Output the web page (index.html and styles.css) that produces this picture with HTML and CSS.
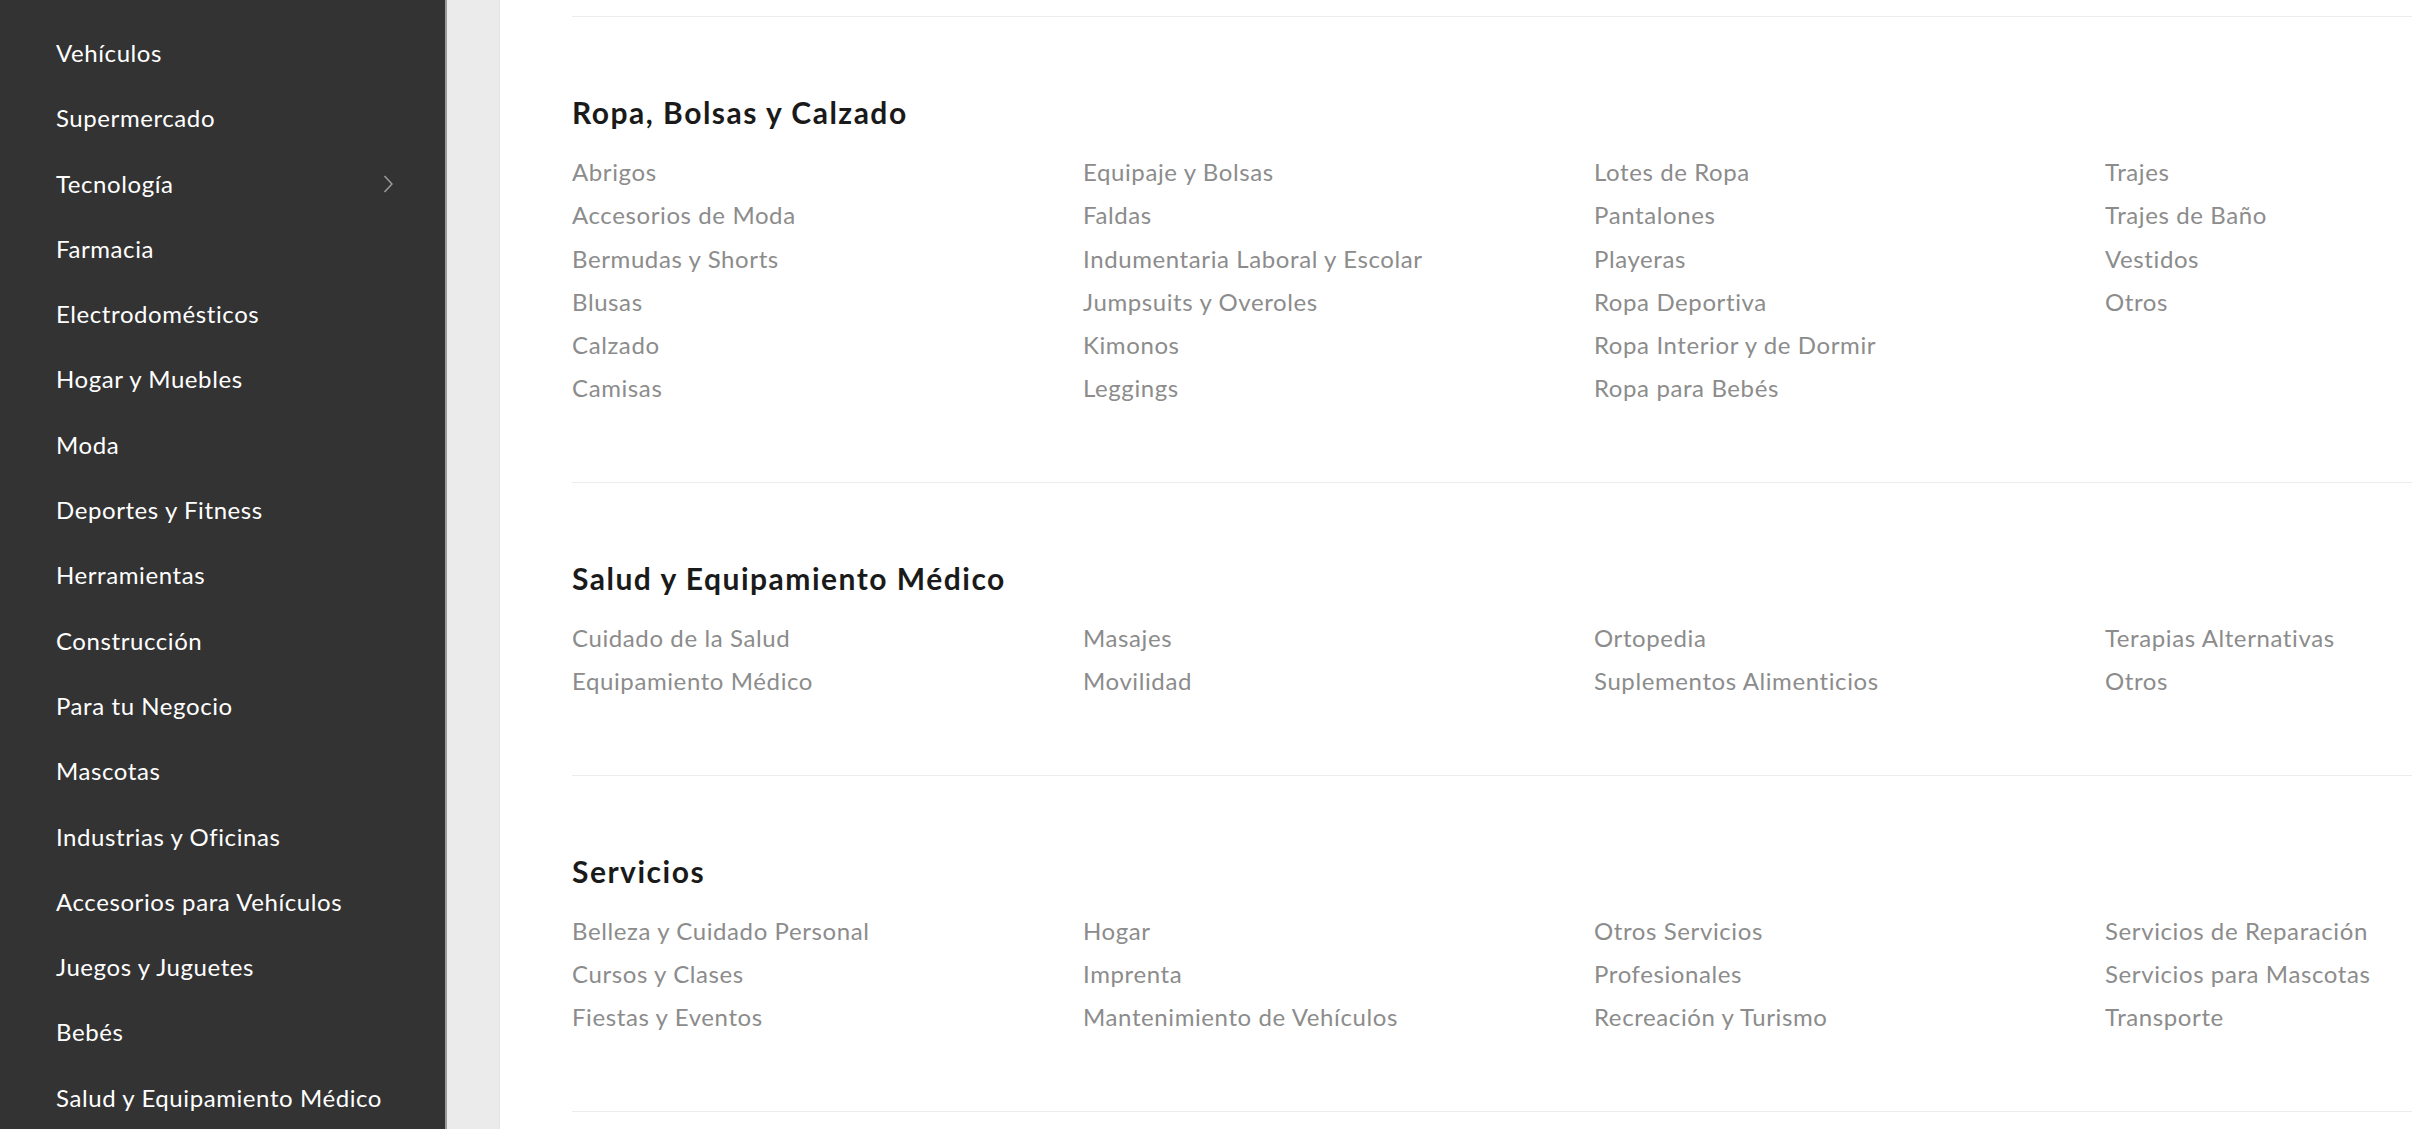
FILE: index.html
```html
<!DOCTYPE html>
<html lang="es">
<head>
<meta charset="utf-8">
<title>Categorías</title>
<link rel="stylesheet" href="styles.css">
</head>
<body>
<div class="layout">
  <nav class="sidebar">
    <ul class="side-list">
      <li class="side-item">Vehículos</li>
      <li class="side-item">Supermercado</li>
      <li class="side-item has-sub">Tecnología
        <svg class="chev" width="10" height="18" viewBox="0 0 10 18"><polyline points="1.5,1 9,9 1.5,17" fill="none" stroke="#9a9a9a" stroke-width="1.6"/></svg>
      </li>
      <li class="side-item">Farmacia</li>
      <li class="side-item">Electrodomésticos</li>
      <li class="side-item">Hogar y Muebles</li>
      <li class="side-item">Moda</li>
      <li class="side-item">Deportes y Fitness</li>
      <li class="side-item">Herramientas</li>
      <li class="side-item">Construcción</li>
      <li class="side-item">Para tu Negocio</li>
      <li class="side-item">Mascotas</li>
      <li class="side-item">Industrias y Oficinas</li>
      <li class="side-item">Accesorios para Vehículos</li>
      <li class="side-item">Juegos y Juguetes</li>
      <li class="side-item">Bebés</li>
      <li class="side-item">Salud y Equipamiento Médico</li>
    </ul>
  </nav>
  <div class="gutter"></div>
  <main class="content">
    <section class="cat">
      <h2 class="cat-title">Ropa, Bolsas y Calzado</h2>
      <div class="cat-grid rows-6">
        <a class="cat-link">Abrigos</a>
        <a class="cat-link">Accesorios de Moda</a>
        <a class="cat-link">Bermudas y Shorts</a>
        <a class="cat-link">Blusas</a>
        <a class="cat-link">Calzado</a>
        <a class="cat-link">Camisas</a>
        <a class="cat-link">Equipaje y Bolsas</a>
        <a class="cat-link">Faldas</a>
        <a class="cat-link">Indumentaria Laboral y Escolar</a>
        <a class="cat-link">Jumpsuits y Overoles</a>
        <a class="cat-link">Kimonos</a>
        <a class="cat-link">Leggings</a>
        <a class="cat-link">Lotes de Ropa</a>
        <a class="cat-link">Pantalones</a>
        <a class="cat-link">Playeras</a>
        <a class="cat-link">Ropa Deportiva</a>
        <a class="cat-link">Ropa Interior y de Dormir</a>
        <a class="cat-link">Ropa para Bebés</a>
        <a class="cat-link">Trajes</a>
        <a class="cat-link">Trajes de Baño</a>
        <a class="cat-link">Vestidos</a>
        <a class="cat-link">Otros</a>
      </div>
    </section>
    <section class="cat">
      <h2 class="cat-title">Salud y Equipamiento Médico</h2>
      <div class="cat-grid rows-2">
        <a class="cat-link">Cuidado de la Salud</a>
        <a class="cat-link">Equipamiento Médico</a>
        <a class="cat-link">Masajes</a>
        <a class="cat-link">Movilidad</a>
        <a class="cat-link">Ortopedia</a>
        <a class="cat-link">Suplementos Alimenticios</a>
        <a class="cat-link">Terapias Alternativas</a>
        <a class="cat-link">Otros</a>
      </div>
    </section>
    <section class="cat last">
      <h2 class="cat-title">Servicios</h2>
      <div class="cat-grid rows-3">
        <a class="cat-link">Belleza y Cuidado Personal</a>
        <a class="cat-link">Cursos y Clases</a>
        <a class="cat-link">Fiestas y Eventos</a>
        <a class="cat-link">Hogar</a>
        <a class="cat-link">Imprenta</a>
        <a class="cat-link">Mantenimiento de Vehículos</a>
        <a class="cat-link">Otros Servicios</a>
        <a class="cat-link">Profesionales</a>
        <a class="cat-link">Recreación y Turismo</a>
        <a class="cat-link">Servicios de Reparación</a>
        <a class="cat-link">Servicios para Mascotas</a>
        <a class="cat-link">Transporte</a>
      </div>
    </section>
  </main>
</div>
</body>
</html>
```

FILE: styles.css
```css
html, body {
  margin: 0;
  padding: 0;
  height: 100%;
  overflow: hidden;
  background: #ffffff;
  font-family: "Lato", "Liberation Sans", sans-serif;
}

.layout {
  display: flex;
  height: 1129px;
  width: 2412px;
  overflow: hidden;
}

.sidebar {
  flex: 0 0 445px;
  background: #333333;
  border-right: 2px solid #9c9c9c;
}

.side-list {
  list-style: none;
  margin: 0;
  padding: 20px 52px 0 56px;
}

.side-item {
  display: flex;
  align-items: center;
  justify-content: space-between;
  height: 65.3px;
  line-height: 65.3px;
  color: #ffffff;
  font-size: 24px;
  font-weight: 400;
  letter-spacing: 0.58px;
  white-space: nowrap;
}

.chev {
  display: block;
  margin-top: 2px;
}

.gutter {
  flex: 0 0 52px;
  background: #ebebeb;
  border-right: 1px solid #e4e4e4;
}

.content {
  flex: 1 1 auto;
  min-width: 0;
  padding: 16px 0 0 72px;
  overflow: hidden;
}

.cat {
  border-top: 1px solid #ececec;
  padding: 77.4px 0 72.2px;
}

.cat.last {
  border-bottom: 1px solid #ececec;
}

.cat-title {
  margin: 0 0 19.6px;
  font-size: 30px;
  line-height: 36px;
  font-weight: 700;
  letter-spacing: 1.5px;
  color: #1a1a1a;
  white-space: nowrap;
}

.cat-grid {
  display: grid;
  grid-auto-flow: column;
  grid-template-columns: repeat(4, 511px);
  grid-auto-rows: 43.3px;
}

.rows-6 { grid-template-rows: repeat(6, 43.3px); }
.rows-2 { grid-template-rows: repeat(2, 43.3px); }
.rows-3 { grid-template-rows: repeat(3, 43.3px); }

.cat-link {
  display: block;
  font-size: 24px;
  line-height: 43.3px;
  letter-spacing: 0.6px;
  color: #8c8c8c;
  white-space: nowrap;
  text-decoration: none;
}
```
